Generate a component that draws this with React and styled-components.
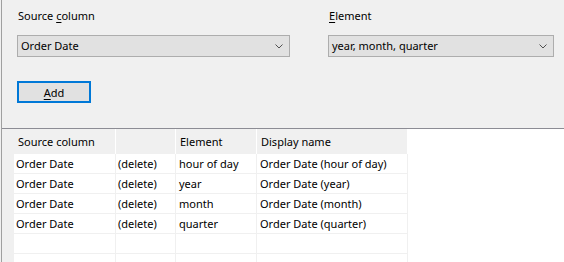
import React from 'react';
import styled, { createGlobalStyle } from 'styled-components';

const FONT = '"Segoe UI", "Noto Sans", sans-serif';

const GlobalStyle = createGlobalStyle`
  html, body {
    margin: 0;
    padding: 0;
    background: #ffffff;
  }
  body {
    font: 11px ${FONT};
    color: #000000;
  }
`;

const rows = [
  ['Order Date', '(delete)', 'hour of day', 'Order Date (hour of day)'],
  ['Order Date', '(delete)', 'year', 'Order Date (year)'],
  ['Order Date', '(delete)', 'month', 'Order Date (month)'],
  ['Order Date', '(delete)', 'quarter', 'Order Date (quarter)'],
  ['', '', '', ''],
  ['', '', '', ''],
];

function Chevron() {
  return (
    <svg width="8" height="5" viewBox="0 0 8 5">
      <path d="M0.5 0.5 L4 4 L7.5 0.5" fill="none" stroke="#505050" strokeWidth="1" />
    </svg>
  );
}

function App() {
  return (
    <Window>
      <GlobalStyle />
      <Content>
        <Panel>
          <Fields>
            <Field width={273}>
              <Label>
                Source <u>c</u>olumn
              </Label>
              <Combo>
                <span>Order Date</span>
                <Chevron />
              </Combo>
            </Field>
            <Field width={226}>
              <Label>
                <u>E</u>lement
              </Label>
              <Combo>
                <span>year, month, quarter</span>
                <Chevron />
              </Combo>
            </Field>
          </Fields>
          <Button>
            <u>A</u>dd
          </Button>
        </Panel>
        <Grid>
          <Strip />
          <HeadCell>Source column</HeadCell>
          <HeadCell />
          <HeadCell>Element</HeadCell>
          <HeadCell>Display name</HeadCell>
          {rows.map((r, i) => (
            <React.Fragment key={i}>
              <Strip />
              {r.map((c, j) => (
                <Cell key={j} pad={j >= 2 ? 3 : 2}>
                  {c}
                </Cell>
              ))}
            </React.Fragment>
          ))}
        </Grid>
      </Content>
    </Window>
  );
}

export default App;

const Window = styled.div`
  width: 564px;
  height: 262px;
  overflow: hidden;
  box-sizing: border-box;
  border-left: 1px solid #f0f0f0;
`;

const Content = styled.div`
  height: 100%;
  border-left: 1px solid #a0a0a0;
`;

const Panel = styled.div`
  height: 129px;
  box-sizing: border-box;
  background: #f0f0f0;
  border-bottom: 1px solid #8c8c94;
  padding: 8px 0 0 15px;
`;

const Fields = styled.div`
  display: flex;
  gap: 38px;
`;

const Field = styled.div`
  display: flex;
  flex-direction: column;
  width: ${(p) => p.width}px;
`;

const Label = styled.div`
  line-height: 16px;
  height: 16px;
  padding-left: 1px;
  margin-bottom: 11px;

  u {
    text-decoration: underline;
    text-underline-offset: 2px;
  }
`;

const Combo = styled.div`
  height: 22px;
  box-sizing: border-box;
  border: 1px solid #adadad;
  background: #e1e1e1;
  display: flex;
  align-items: center;
  justify-content: space-between;
  padding: 0 6px 0 3px;
  line-height: 16px;
`;

const Button = styled.button`
  margin-top: 24px;
  width: 74px;
  height: 22px;
  box-sizing: border-box;
  border: 2px solid #0078d7;
  background: #e1e1e1;
  font: 11px ${FONT};
  color: #000000;
  padding: 0;

  u {
    text-decoration: underline;
    text-underline-offset: 2px;
  }
`;

const Grid = styled.div`
  display: grid;
  grid-template-columns: 12px 102px 60px 81px 151px;
  grid-auto-rows: 20px;
  grid-template-rows: 25px;
`;

const Strip = styled.div`
  background: #f0f0f0;
`;

const HeadCell = styled.div`
  background: #f0f0f0;
  border-right: 1px solid #ffffff;
  display: flex;
  align-items: center;
  padding-left: 4px;
  white-space: nowrap;
`;

const Cell = styled.div`
  background: #ffffff;
  border-right: 1px solid #f0f0f0;
  border-bottom: 1px solid #f0f0f0;
  display: flex;
  align-items: center;
  padding-left: ${(p) => p.pad}px;
  white-space: nowrap;
  overflow: hidden;
`;
